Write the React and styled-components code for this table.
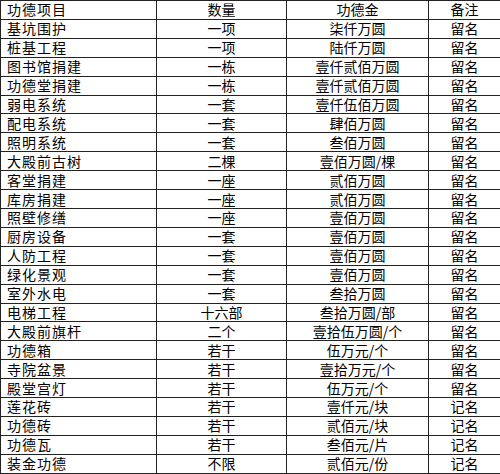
import styled, { createGlobalStyle } from "styled-components";

const GlobalStyle = createGlobalStyle`
    body {
        margin: 0;
        background: #fff;
    }
`;

const Table = styled.table`
    width: 500px;
    height: 474px;
    border-collapse: collapse;
    table-layout: fixed;
    font-family: "Noto Sans CJK SC", "DejaVu Sans", sans-serif;
    font-size: 14px;
    color: #000;
`;

const Row = styled.tr`
    height: 18px;
`;

const Cell = styled.td`
    border: 1px solid #222;
    padding: 0 0 0 ${({ $left }) => ($left ? "6px" : "0")};
    text-align: ${({ $left }) => ($left ? "left" : "center")};
    letter-spacing: ${({ $left }) => ($left ? "1px" : "0")};
    line-height: 17px;
    white-space: nowrap;
    overflow: hidden;
`;

const rows = [
    ["基坑围护", "一项", "柒仟万圆", "留名"],
    ["桩基工程", "一项", "陆仟万圆", "留名"],
    ["图书馆捐建", "一栋", "壹仟贰佰万圆", "留名"],
    ["功德堂捐建", "一栋", "壹仟贰佰万圆", "留名"],
    ["弱电系统", "一套", "壹仟伍佰万圆", "留名"],
    ["配电系统", "一套", "肆佰万圆", "留名"],
    ["照明系统", "一套", "叁佰万圆", "留名"],
    ["大殿前古树", "二棵", "壹佰万圆/棵", "留名"],
    ["客堂捐建", "一座", "贰佰万圆", "留名"],
    ["库房捐建", "一座", "贰佰万圆", "留名"],
    ["照壁修缮", "一座", "壹佰万圆", "留名"],
    ["厨房设备", "一套", "壹佰万圆", "留名"],
    ["人防工程", "一套", "壹佰万圆", "留名"],
    ["绿化景观", "一套", "壹佰万圆", "留名"],
    ["室外水电", "一套", "叁拾万圆", "留名"],
    ["电梯工程", "十六部", "叁拾万圆/部", "留名"],
    ["大殿前旗杆", "二个", "壹拾伍万圆/个", "留名"],
    ["功德箱", "若干", "伍万元/个", "留名"],
    ["寺院盆景", "若干", "壹拾万元/个", "留名"],
    ["殿堂宫灯", "若干", "伍万元/个", "留名"],
    ["莲花砖", "若干", "壹仟元/块", "记名"],
    ["功德砖", "若干", "贰佰元/块", "记名"],
    ["功德瓦", "若干", "叁佰元/片", "记名"],
    ["装金功德", "不限", "贰佰元/份", "记名"],
];

const App = () => {
    return (
        <>
            <GlobalStyle />
            <Table>
                <colgroup>
                    <col style={{ width: 156 }} />
                    <col style={{ width: 130 }} />
                    <col style={{ width: 142 }} />
                    <col style={{ width: 72 }} />
                </colgroup>
                <tbody>
                    <Row>
                        <Cell $left>功德项目</Cell>
                        <Cell>数量</Cell>
                        <Cell>功德金</Cell>
                        <Cell>备注</Cell>
                    </Row>
                    {rows.map(([name, count, amount, note]) => (
                        <Row key={name}>
                            <Cell $left>{name}</Cell>
                            <Cell>{count}</Cell>
                            <Cell>{amount}</Cell>
                            <Cell>{note}</Cell>
                        </Row>
                    ))}
                </tbody>
            </Table>
        </>
    );
};

export default App;
